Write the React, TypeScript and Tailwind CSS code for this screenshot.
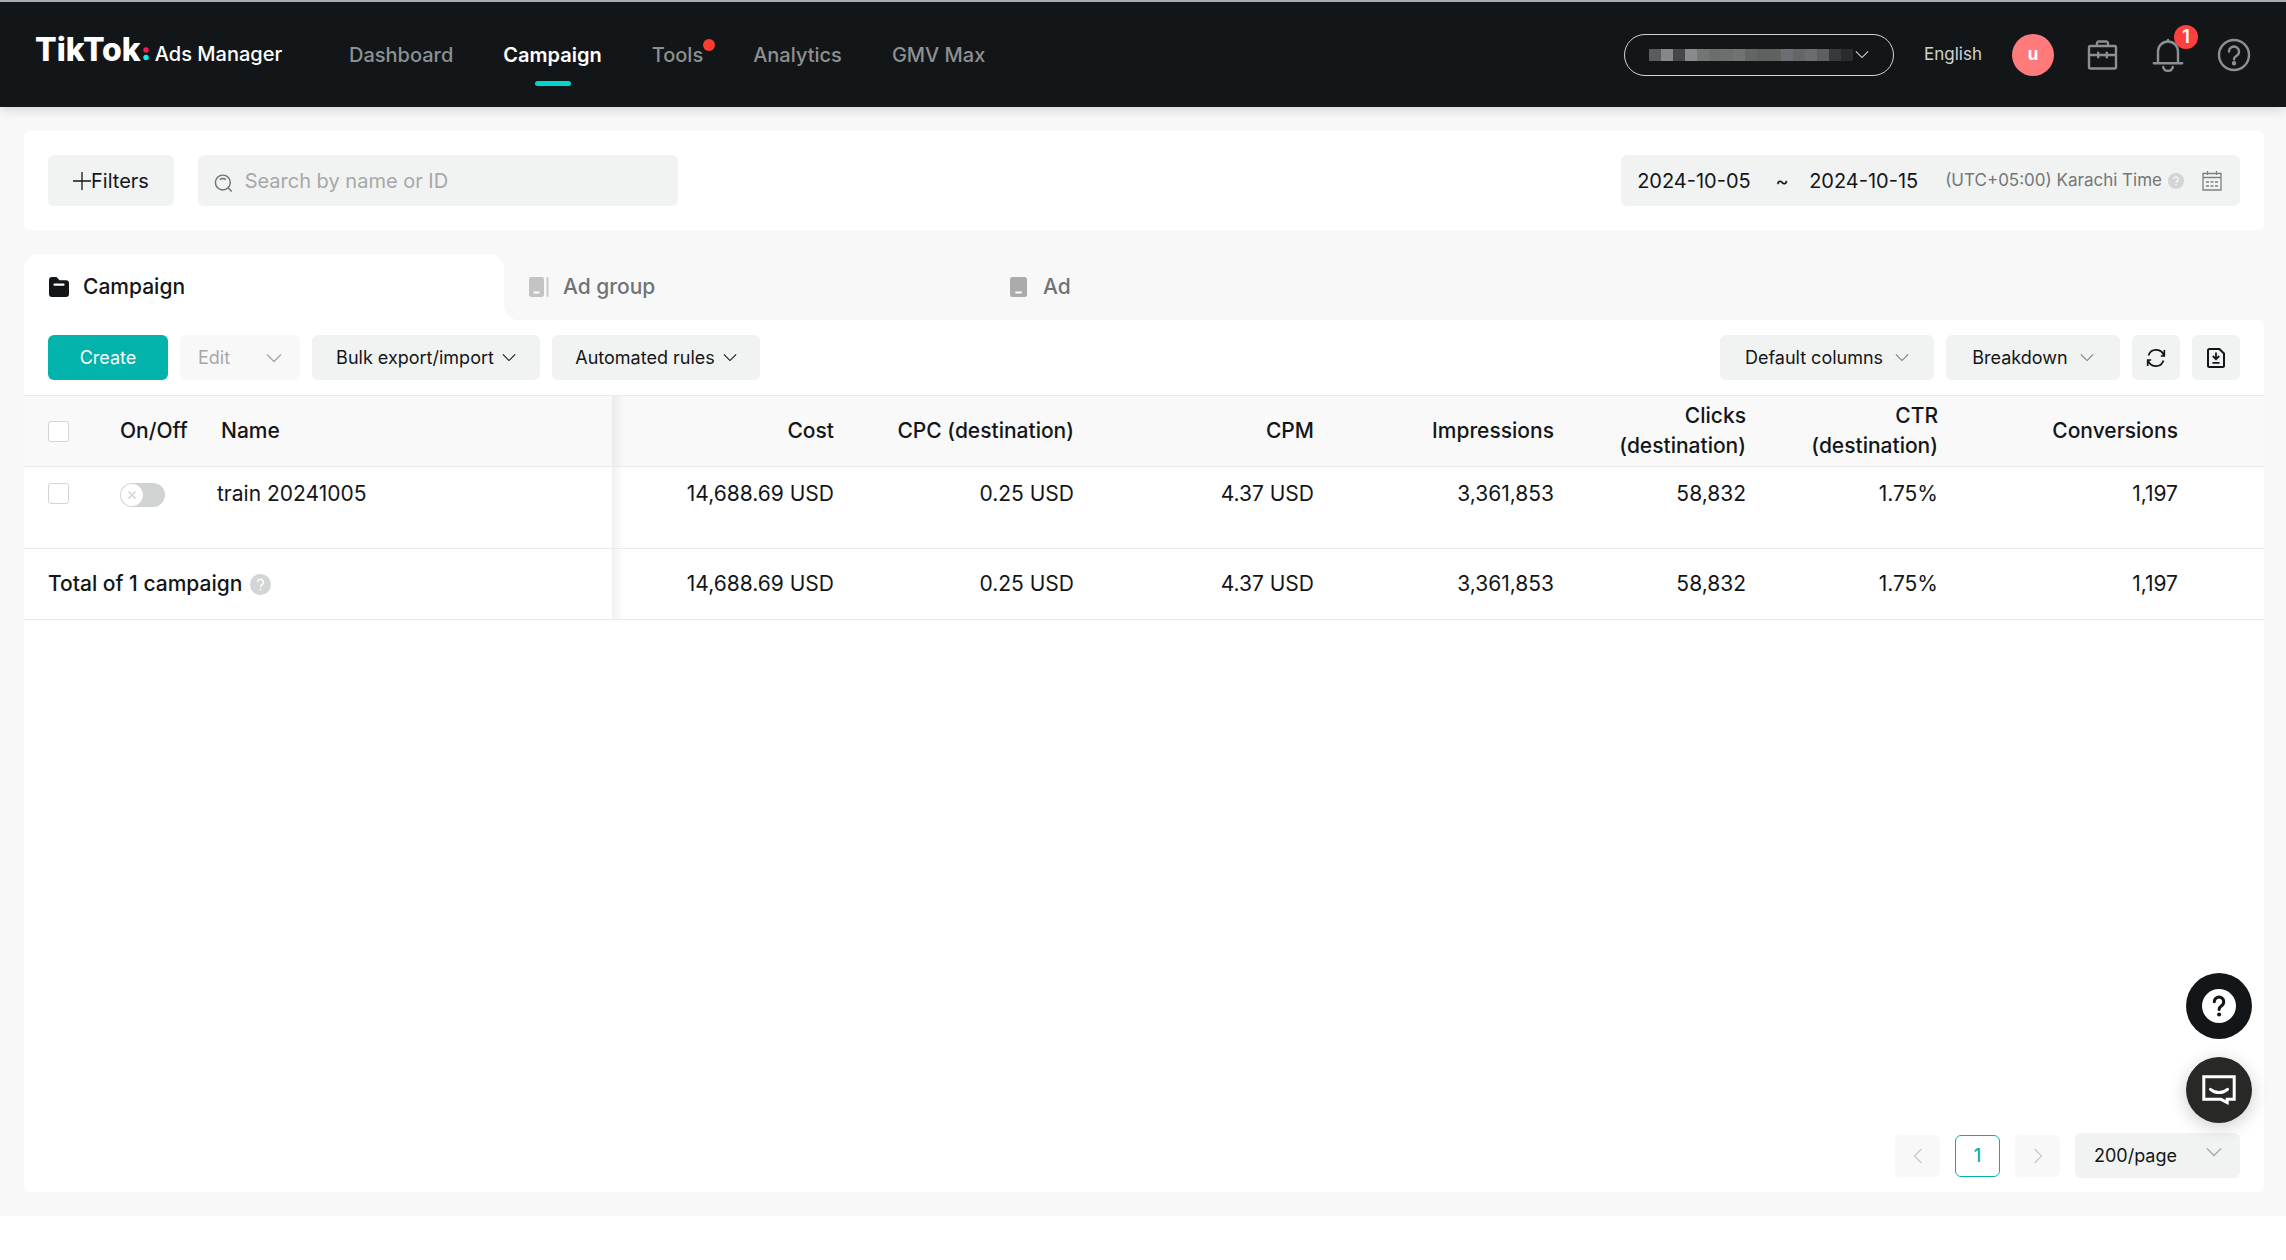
import { useState, type ReactNode } from "react";

const NAV = [
  { label: "Dashboard" },
  { label: "Campaign", active: true },
  { label: "Tools", dot: true },
  { label: "Analytics" },
  { label: "GMV Max" },
];

const METRICS = ["Cost", "CPC (destination)", "CPM", "Impressions", "Clicks (destination)", "CTR (destination)", "Conversions"];

const VALUES = ["14,688.69 USD", "0.25 USD", "4.37 USD", "3,361,853", "58,832", "1.75%", "1,197"];

// masked account name, one shade per block
const MASK = [
  "#5a5d5d", "#858788", "#454748", "#8a8c8c", "#747676", "#6c6e6d", "#6d6f6f", "#717372",
  "#636564", "#5f6160", "#60625f", "#6c6f71", "#646767", "#6b6d6f", "#5d5f61", "#38393b", "#292b2c",
];

function Chevron({ className = "" }: { className?: string }) {
  return (
    <svg viewBox="0 0 16 10" className={className} fill="none" stroke="currentColor" aria-hidden>
      <path d="M1 1.5l7 7 7-7" strokeWidth="1.3" />
    </svg>
  );
}

function HelpDot({ className }: { className: string }) {
  return (
    <svg viewBox="0 0 20 20" className={className} aria-hidden>
      <circle cx="10" cy="10" r="10" fill="#d3d5d5" />
      <path d="M7.2 7.7a2.8 2.8 0 1 1 4.3 2.4c-1 .7-1.5 1.2-1.5 2.3" fill="none" stroke="#fff" strokeWidth="1.4" />
      <circle cx="10" cy="14.7" r=".9" fill="#fff" />
    </svg>
  );
}

function Logo() {
  return (
    <a href="#home" className="flex items-baseline pb-2 text-white" aria-label="TikTok Ads Manager">
      <span className="text-[32px] leading-9 font-extrabold">TikTok</span>
      <svg viewBox="0 0 6 14" className="mr-1.5 ml-0.5 h-[14px] w-[6px]" aria-hidden>
        <circle cx="3" cy="3" r="2.7" fill="#ff1752" />
        <circle cx="3" cy="10.5" r="2.7" fill="#00f2ea" />
      </svg>
      <span className="text-[20px] font-medium">Ads Manager</span>
    </a>
  );
}

function TopBar() {
  return (
    <header className="relative flex h-[107px] items-center border-t-2 border-[#a7adb2] bg-[#131618] pr-[34px] pl-[35px] shadow-[0_2px_12px_rgba(0,0,0,0.16)]">
      <div className="w-[314px]">
        <Logo />
      </div>
      <nav className="flex gap-[50px] text-[20px] font-medium text-[#8d9091]">
        {NAV.map((item) => (
          <a
            key={item.label}
            href={`#${item.label}`}
            className={`relative ${item.active ? "font-semibold text-white" : ""}`}
            aria-current={item.active ? "page" : undefined}
          >
            {item.label}
            {item.dot && <span className="absolute -top-px -right-3 size-3 rounded-full bg-[#ff3b30]" />}
            {item.active && (
              <span className="absolute -bottom-4 left-1/2 h-[5px] w-9 -translate-x-1/2 rounded-sm bg-[#00d5cc]" />
            )}
          </a>
        ))}
      </nav>

      <div className="ml-auto flex items-center gap-[30px] text-[#8d9091]">
        <button
          type="button"
          aria-label="Switch account"
          className="flex h-[42px] w-[270px] items-center justify-between rounded-full border border-[#d0d4d4] px-6"
        >
          <span className="flex">
            {MASK.map((shade, i) => (
              <span key={i} className="h-3 w-3" style={{ background: shade }} />
            ))}
          </span>
          <Chevron className="h-[9px] w-[14px] text-[#d0d4d4]" />
        </button>
        <button type="button" className="text-[17px] text-[#d0d2d2]">
          English
        </button>
        <button
          type="button"
          className="flex size-[42px] items-center justify-center rounded-full bg-[#ff7b7b] text-[17px] font-bold text-white"
        >
          u
        </button>
        <button type="button" aria-label="Toolbox" className="size-9">
          <svg viewBox="0 0 36 36" fill="none" stroke="currentColor" strokeWidth="2.4">
            <rect x="5" y="9" width="27" height="22.5" rx="1.5" />
            <path d="M13 9V6.300a1.8 1.8 0 0 1 1.800-1.800h7.400A1.800 1.800 0 0 1 24 6.300V9M5 18h27" />
            <path d="M14.200 15.800v4.400M22.800 15.800v4.400" strokeLinecap="round" />
          </svg>
        </button>
        <button type="button" aria-label="Notifications" className="relative size-9">
          <svg viewBox="0 0 36 36" fill="none" stroke="currentColor" strokeWidth="2.4" strokeLinecap="round">
            <path d="M8 26.200V14.500a10 10 0 0 1 20 0v11.700M3.800 26.200h28.400M18 3v1.500M13.200 30a4.900 4.900 0 0 0 9.600 0" />
          </svg>
          <span className="absolute -top-3 -right-3 flex size-6 items-center justify-center rounded-full bg-[#ff4040] text-[18px] font-semibold text-white">
            1
          </span>
        </button>
        <button type="button" aria-label="Help" className="size-9">
          <svg viewBox="0 0 36 36" fill="none" stroke="currentColor" strokeWidth="2.4" strokeLinecap="round">
            <circle cx="18" cy="18" r="15" />
            <path d="M13 14.500a5 5 0 1 1 7.600 4.300c-1.800 1.100-2.600 1.800-2.600 3.500" />
            <circle cx="18" cy="26.300" r="1" fill="currentColor" />
          </svg>
        </button>
      </div>
    </header>
  );
}

function FilterBar() {
  return (
    <section className="flex items-center gap-6 rounded-md bg-white p-6">
      <button
        type="button"
        className="flex h-[51px] w-[126px] items-center justify-center rounded-md bg-[#f1f2f2] text-[20px]"
      >
        <svg viewBox="0 0 18 18" className="size-[18px]" stroke="currentColor" strokeWidth="1.3" aria-hidden>
          <path d="M9 0v18M0 9h18" />
        </svg>
        Filters
      </button>
      <label className="flex h-[51px] w-[480px] items-center gap-3 rounded-md bg-[#f1f2f2] px-4">
        <svg viewBox="0 0 20 20" className="mt-1 size-5 text-[#6f7273]" fill="none" stroke="currentColor" strokeWidth="1.5" aria-hidden>
          <circle cx="9.500" cy="9.500" r="8" />
          <path d="M15 15l4 4M6.300 6.500a4.500 4.500 0 0 1 6.400 0" />
        </svg>
        <input
          type="text"
          aria-label="Search by name or ID"
          placeholder="Search by name or ID"
          className="w-full bg-transparent text-[20px] outline-none placeholder:text-[#a6a8a8]"
        />
      </label>
      <div className="ml-auto flex h-[51px] items-center rounded-md bg-[#f1f2f2] pr-[18px] pl-4">
        <input aria-label="Start date" defaultValue="2024-10-05" className="w-[118px] bg-transparent text-[20px]" />
        <span className="w-[54px] text-center text-[20px]">~</span>
        <input aria-label="End date" defaultValue="2024-10-15" className="w-[118px] bg-transparent text-[20px]" />
        <span className="ml-[18px] text-[17px] text-[#747777]">(UTC+05:00) Karachi Time</span>
        <HelpDot className="ml-1.5 size-4" />
        <button type="button" aria-label="Open calendar" className="ml-[18px] text-[#7d8082]">
          <svg viewBox="0 0 20 20" className="size-5" fill="none" stroke="currentColor" strokeWidth="1.3">
            <path d="M1 2.500h18V19H1zM1 6.500h18M5.500 0v4M14.500 0v4" />
            <path d="M4 11h12M4 15h12" strokeWidth="1.6" strokeDasharray="3 1.5" />
          </svg>
        </button>
      </div>
    </section>
  );
}

const TABS = [
  {
    label: "Campaign",
    icon: (
      <svg viewBox="0 0 20 20" className="size-5">
        <path d="M0 3a3 3 0 0 1 3-3h4.500l3 3.200H17a3 3 0 0 1 3 3V17a3 3 0 0 1-3 3H3a3 3 0 0 1-3-3z" fill="#131618" />
        <path d="M5.500 7.700h9" stroke="#fff" strokeWidth="2.2" strokeLinecap="round" />
      </svg>
    ),
  },
  {
    label: "Ad group",
    icon: (
      <svg viewBox="0 0 20 20" className="size-5">
        <rect width="15" height="20" rx="2.5" fill="#c2c3c3" />
        <path d="M4.500 15.500h6" stroke="#fff" strokeWidth="2" />
        <path d="M18.500 1v18" stroke="#c9caca" strokeWidth="2" strokeLinecap="round" />
      </svg>
    ),
  },
  {
    label: "Ad",
    icon: (
      <svg viewBox="0 0 20 20" className="size-5">
        <rect x="1" width="17" height="20" rx="2.5" fill="#a9abad" />
        <path d="M6.300 15.500h6.400" stroke="#fff" strokeWidth="2" />
      </svg>
    ),
  },
];

function Tabs({ active, onChange }: { active: string; onChange: (tab: string) => void }) {
  return (
    <div role="tablist" className="flex h-[66px] text-[21px] font-medium">
      {TABS.map((tab) => {
        const on = tab.label === active;
        return (
          <button
            key={tab.label}
            type="button"
            role="tab"
            aria-selected={on}
            onClick={() => onChange(tab.label)}
            className={`relative flex w-[480px] items-center gap-[14px] px-[25px] ${
              on ? "rounded-t-[15px] bg-white text-[#131618]" : "text-[#707373]"
            }`}
          >
            {tab.icon}
            {tab.label}
            {/* curve that joins the tab to the panel */}
            {on && (
              <span className="absolute bottom-0 left-full size-[15px] bg-[radial-gradient(circle_at_top_right,transparent_15px,white_15px)]" />
            )}
          </button>
        );
      })}
    </div>
  );
}

function ToolButton({ width, children, label }: { width: string; children: ReactNode; label?: string }) {
  return (
    <button
      type="button"
      aria-label={label}
      className={`flex h-[45px] items-center justify-center rounded-md bg-[#f1f2f2] ${width}`}
    >
      {children}
    </button>
  );
}

function Toolbar() {
  return (
    <div className="flex items-center gap-3 px-6 py-[15px] text-[18px]">
      <button type="button" className="h-[45px] w-[120px] rounded-md bg-[#02b3ac] text-white">
        Create
      </button>
      <button
        type="button"
        disabled
        className="flex h-[45px] w-[120px] items-center justify-between rounded-md bg-[#f8f8f8] px-[18px] text-[#a6a8a8]"
      >
        Edit
        <Chevron className="h-[10px] w-4" />
      </button>
      <ToolButton width="w-[228px] gap-2">
        Bulk export/import
        <Chevron className="h-[9px] w-[14px]" />
      </ToolButton>
      <ToolButton width="w-[208px] gap-2">
        Automated rules
        <Chevron className="h-[9px] w-[14px]" />
      </ToolButton>

      <div className="ml-auto flex gap-3">
        <ToolButton width="w-[214px] gap-3">
          Default columns
          <Chevron className="h-[9px] w-[14px] text-[#7d8082]" />
        </ToolButton>
        <ToolButton width="w-[174px] gap-3">
          Breakdown
          <Chevron className="h-[9px] w-[14px] text-[#7d8082]" />
        </ToolButton>
        <ToolButton width="w-12" label="Refresh">
          <svg viewBox="0 0 20 20" className="size-5" fill="none" stroke="currentColor" strokeWidth="1.7">
            <path d="M2.500 7.500a8 8 0 0 1 15.400.5M17.500 12.500a8 8 0 0 1-15.400-.5M18.300 2v6h-3.500M1.700 18v-6h3.500" />
          </svg>
        </ToolButton>
        <ToolButton width="w-12" label="Export">
          <svg viewBox="0 0 18 20" className="h-5 w-[18px]" fill="none" stroke="currentColor" strokeWidth="2">
            <path d="M2.500 1h9.800L17 5.500v12a1.500 1.500 0 0 1-1.500 1.500h-13A1.500 1.500 0 0 1 1 17.500v-15A1.500 1.500 0 0 1 2.500 1z" />
            <path d="M9 4.500v6.300M5.800 8l3.200 3.200L12.200 8M5.500 14.800h7" strokeWidth="1.8" />
          </svg>
        </ToolButton>
      </div>
    </div>
  );
}

const CHECKBOX = "block size-[21px] appearance-none rounded-[3px] border border-[#d3d5d5] bg-white checked:bg-[#02b3ac]";
const FROZEN_EDGE = "bg-[linear-gradient(to_right,rgba(0,0,0,0.06),transparent_12px)]";

function CampaignTable() {
  return (
    <div className="overflow-x-auto">
      <table className="w-full table-fixed border-t border-[#e8e9e9] text-right text-[21px] leading-[30px]">
        <colgroup>
          <col className="w-[72px]" />
          <col className="w-[101px]" />
          <col className="w-[415px]" />
          <col className="w-[246px]" />
          <col className="w-[240px]" />
          <col className="w-[240px]" />
          <col className="w-[240px]" />
          <col className="w-[192px]" />
          <col className="w-[192px]" />
          <col className="w-[240px]" />
          <col />
        </colgroup>
        <thead>
          <tr className="h-[71px] border-b border-[#e8e9e9] bg-[#f9f9f9]">
            <th className="pl-6">
              <input type="checkbox" aria-label="Select all campaigns" className={CHECKBOX} />
            </th>
            <th className="pl-6 text-left font-medium">On/Off</th>
            <th className="pl-6 text-left font-medium">Name</th>
            {METRICS.map((name, i) => (
              <th key={name} className={`pr-6 pl-6 font-medium ${i === 0 ? FROZEN_EDGE : ""}`}>
                {name}
              </th>
            ))}
            <th />
          </tr>
        </thead>
        <tbody>
          <tr className="h-[82px] border-b border-[#e8e9e9] align-top">
            <td className="pt-4 pl-6">
              <input type="checkbox" aria-label="Select train 20241005" className={CHECKBOX} />
            </td>
            <td className="pt-4 pl-6">
              <label className="relative block h-6 w-[45px]">
                <input
                  type="checkbox"
                  role="switch"
                  aria-label="Turn train 20241005 on or off"
                  className="block h-6 w-[45px] appearance-none rounded-full bg-[#d1d3d3] checked:bg-[#02b3ac]"
                />
                <svg viewBox="0 0 22 22" className="absolute top-px left-px size-[22px]" aria-hidden>
                  <circle cx="11" cy="11" r="11" fill="#fff" />
                  <path d="M7.500 7.500l7 7M14.500 7.500l-7 7" stroke="#d9dbdb" strokeWidth="1.8" />
                </svg>
              </label>
            </td>
            <td className="pt-3 pl-5 text-left">train 20241005</td>
            {VALUES.map((value, i) => (
              <td key={METRICS[i]} className={`pt-3 pr-6 ${i === 0 ? FROZEN_EDGE : ""}`}>
                {value}
              </td>
            ))}
            <td />
          </tr>
        </tbody>
        <tfoot>
          <tr className="h-[71px] border-b border-[#e8e9e9]">
            <th colSpan={3} scope="row" className="pl-6 text-left font-medium">
              <span className="flex items-center gap-2">
                Total of 1 campaign
                <HelpDot className="size-[21px]" />
              </span>
            </th>
            {VALUES.map((value, i) => (
              <td key={METRICS[i]} className={`pr-6 ${i === 0 ? FROZEN_EDGE : ""}`}>
                {value}
              </td>
            ))}
            <td />
          </tr>
        </tfoot>
      </table>
    </div>
  );
}

function Pagination() {
  return (
    <div className="mt-auto flex items-center justify-end gap-[15px] pr-6 pb-[14px] text-[18px]">
      <button
        type="button"
        disabled
        aria-label="Previous page"
        className="flex h-[42px] w-[45px] items-center justify-center rounded-md bg-[#f8f8f8] text-[#c9cbcb]"
      >
        <Chevron className="h-[10px] w-4 rotate-90" />
      </button>
      <button
        type="button"
        aria-current="page"
        className="h-[42px] w-[45px] rounded-md border border-[#02b3ac] font-medium text-[#02b3ac]"
      >
        1
      </button>
      <button
        type="button"
        disabled
        aria-label="Next page"
        className="flex h-[42px] w-[45px] items-center justify-center rounded-md bg-[#f8f8f8] text-[#c9cbcb]"
      >
        <Chevron className="h-[10px] w-4 -rotate-90" />
      </button>
      <label className="relative">
        <select aria-label="Rows per page" className="h-[45px] w-[165px] appearance-none rounded-md bg-[#f1f2f2] px-[19px]">
          <option>200/page</option>
          <option>100/page</option>
          <option>50/page</option>
        </select>
        <Chevron className="pointer-events-none absolute top-[14px] right-[18px] h-[10px] w-4 text-[#a6a8a8]" />
      </label>
    </div>
  );
}

function FloatingHelp() {
  return (
    <div className="fixed right-[34px] bottom-[137px] flex flex-col gap-[18px]">
      <button type="button" aria-label="Help center" className="size-[66px] rounded-full bg-[#131618]">
        <svg viewBox="0 0 66 66" fill="none">
          <circle cx="33" cy="33" r="17" fill="#fff" />
          <path d="M28.300 28.800a4.700 4.700 0 1 1 7.300 3.900c-1.700 1.100-2.500 1.800-2.500 3.800" stroke="#131618" strokeWidth="3" strokeLinecap="round" />
          <circle cx="33.100" cy="41.500" r="2" fill="#131618" />
        </svg>
      </button>
      <button
        type="button"
        aria-label="Open chat"
        className="size-[66px] rounded-full bg-[#282827] shadow-[0_4px_18px_rgba(0,0,0,0.2)]"
      >
        <svg viewBox="0 0 66 66" fill="none" stroke="#fff" strokeWidth="3">
          <path d="M17.800 19.700h30.400v22.600h-7v3.200l-6.200-3.200H17.800z" />
          <path d="M24.500 32.300c4.800 4.300 12.200 4.300 17 0" strokeLinecap="round" />
        </svg>
      </button>
    </div>
  );
}

export default function App() {
  const [tab, setTab] = useState("Campaign");

  return (
    <div className="flex min-h-screen flex-col bg-white pb-11 font-[Inter,'Liberation_Sans',sans-serif] text-[#131618]">
      <TopBar />
      <main className="flex flex-1 flex-col gap-6 bg-[#f8f8f8] pt-6 pr-[22px] pb-6 pl-6">
        <FilterBar />
        <div className="flex flex-1 flex-col">
          <Tabs active={tab} onChange={setTab} />
          <section className="flex flex-1 flex-col rounded-r-md rounded-bl-md bg-white">
            <Toolbar />
            <CampaignTable />
            <Pagination />
          </section>
        </div>
      </main>
      <FloatingHelp />
    </div>
  );
}
